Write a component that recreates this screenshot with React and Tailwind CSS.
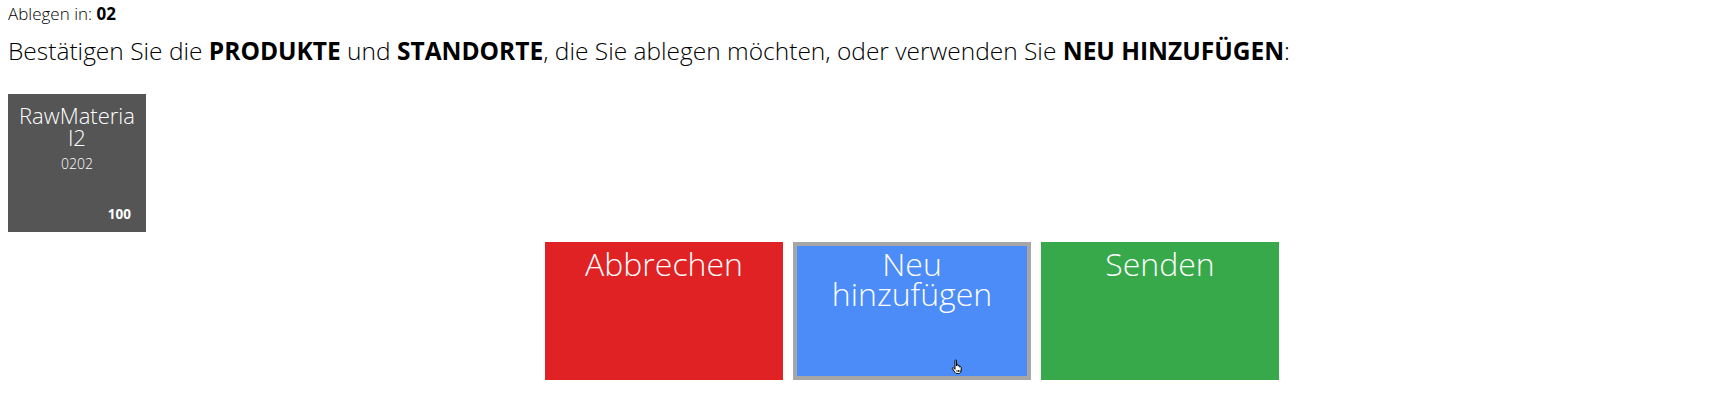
import React from "react";

function HandCursor() {
  return (
    <svg width="13" height="16" viewBox="0 0 13 16" className="absolute left-[154px] top-[113px]">
      <path
        d="M4 1.5c0-.8 1.5-.8 1.5 0V7l.3-1.2c.3-.7 1.4-.6 1.4.2v1.2c.2-.8 1.4-.8 1.5 0v1c.2-.8 1.4-.8 1.5 0V11c0 2-1 3.5-2.5 3.5H6c-1.2 0-1.8-.7-2.4-1.6L1.4 9.6c-.4-.7.5-1.4 1.1-.8L4 10.3z"
        fill="#fff"
        stroke="#000"
        strokeWidth="1"
        strokeLinejoin="round"
      />
      <path d="M6 11v2M7.5 11v2M9 11v2" stroke="#000" strokeWidth="0.8" />
    </svg>
  );
}

export default function App() {
  return (
    <div className="min-h-[402px] bg-white text-black" style={{ fontFamily: "'Open Sans', 'Noto Sans', sans-serif" }}>
      <div className="pl-[8px] pt-[3px]">
        <div className="text-[17px] leading-[22px] font-light">
          Ablegen in: <b className="font-bold">02</b>
        </div>
        <div className="mt-[10px] text-[24.5px] leading-[32px] font-light">
          Bestätigen Sie die <b className="font-bold">PRODUKTE</b> und <b className="font-bold">STANDORTE</b>, die Sie ablegen möchten, oder verwenden Sie <b className="font-bold">NEU HINZUFÜGEN</b>:
        </div>
        <div className="mt-[27px] flex h-[138px] w-[138px] flex-col bg-[#555555] px-[9px] pt-[10px] pb-[10px] text-white">
          <div className="break-all text-center text-[22px] leading-[22px] font-light">RawMaterial2</div>
          <div className="mt-[6px] text-center text-[14px] leading-[20px] font-light">0202</div>
          <div className="mt-auto pr-[6px] text-right text-[13.5px] leading-[16px] font-bold">100</div>
        </div>
      </div>
      <div className="ml-[545px] mt-[10px] flex gap-[10px]">
        <div className="h-[138px] w-[238px] border-4 border-[#e02224] bg-[#e02224] px-2 pt-[3px] text-center text-[32px] leading-[30px] font-light text-white">
          Abbrechen
        </div>
        <div className="relative h-[138px] w-[238px] border-4 border-[#a6a6a6] bg-[#4b8cf8] px-2 pt-[3px] text-center text-[32px] leading-[30px] font-light text-white">
          Neu hinzufügen
          <HandCursor />
        </div>
        <div className="h-[138px] w-[238px] border-4 border-[#38a94a] bg-[#38a94a] px-2 pt-[3px] text-center text-[32px] leading-[30px] font-light text-white">
          Senden
        </div>
      </div>
    </div>
  );
}
